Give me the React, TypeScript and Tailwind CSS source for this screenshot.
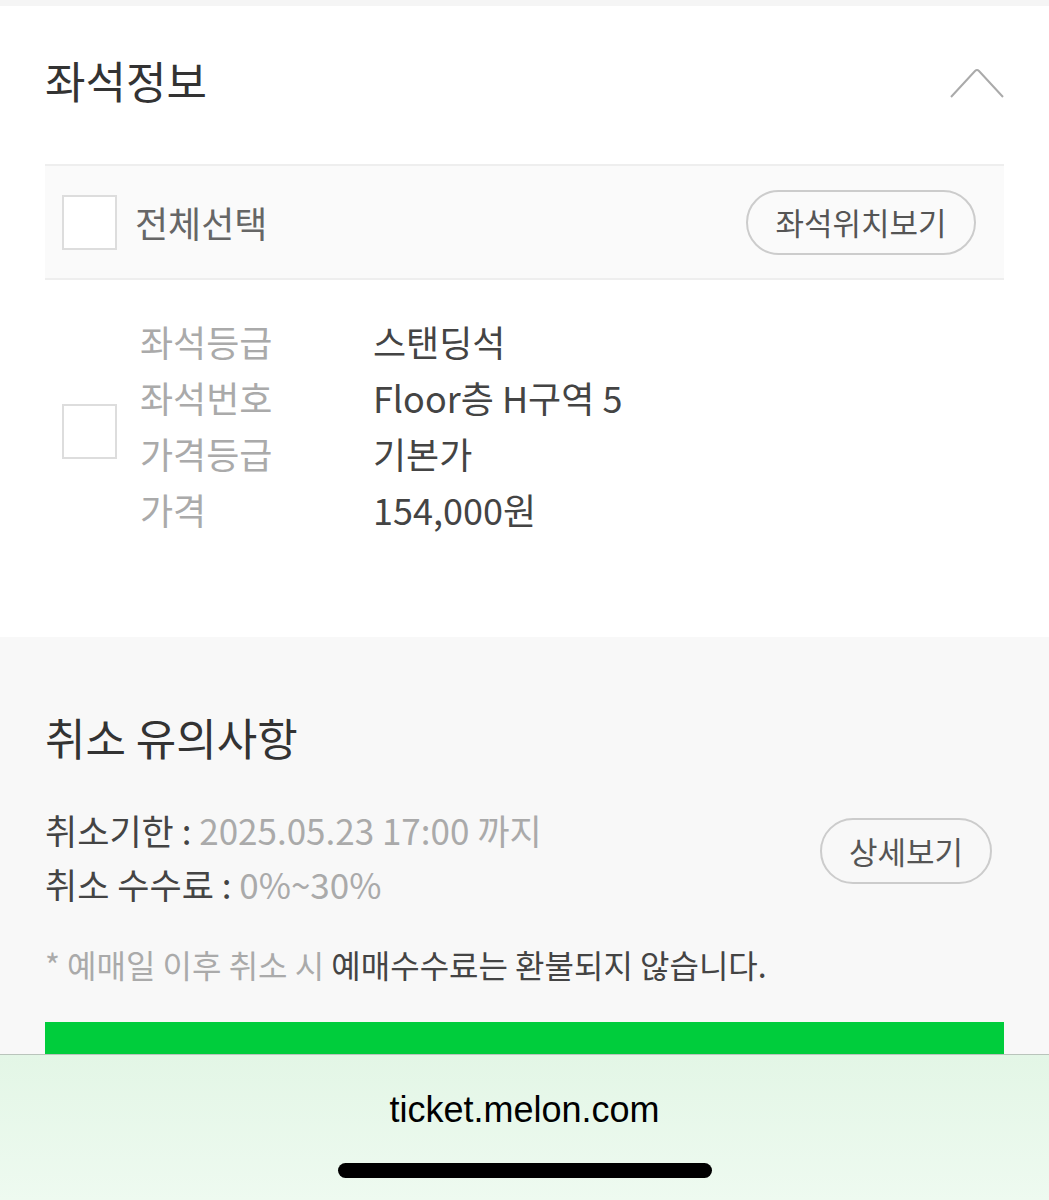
import React from 'react'

const rows = [
  { label: '좌석등급', value: '스탠딩석' },
  { label: '좌석번호', value: 'Floor층 H구역 5' },
  { label: '가격등급', value: '기본가' },
  { label: '가격', value: '154,000원' },
]

const Box: React.FC = () => (
  <div className="h-[55px] w-[55px] shrink-0 border-2 border-[#dddddd] bg-white"></div>
)

export default function App() {
  return (
    <div
      className="flex h-[1200px] w-[1049px] flex-col overflow-hidden bg-white"
      style={{ fontFamily: '"Noto Sans CJK KR", "Noto Sans", sans-serif' }}
    >
      {/* 상단 여백 */}
      <div className="h-[6px] bg-[#f5f5f5]"></div>

      {/* 좌석정보 */}
      <section className="px-[45px]">
        <div className="flex items-center justify-between pt-[52px] pb-[62px]">
          <h2 className="text-[44px] leading-[44px] text-[#333333]">좌석정보</h2>
          <svg width="54" height="30" viewBox="0 0 54 30" fill="none" className="mt-[6px]">
            <path d="M1 29 L25 3 Q27 1 29 3 L53 29" stroke="#aaaaaa" strokeWidth="2" />
          </svg>
        </div>

        <div className="flex h-[116px] items-center justify-between border-y-2 border-[#eeeeee] bg-[#fafafa] pl-[17px] pr-[28px]">
          <div className="flex items-center gap-[18px]">
            <Box />
            <span className="text-[36px] leading-none text-[#666666]">전체선택</span>
          </div>
          <button
            type="button"
            className="flex h-[65px] w-[230px] items-center justify-center rounded-full border-2 border-[#cccccc] text-[31px] text-[#555555]"
          >
            좌석위치보기
          </button>
        </div>

        <div className="flex items-center pt-[33px] pb-[100px] pl-[17px]">
          <div className="mt-[12px]">
            <Box />
          </div>
          <div className="ml-[23px] flex flex-col">
            {rows.map(r => (
              <div key={r.label} className="flex h-[56px] items-center text-[36px]">
                <span className="w-[233px] text-[#aaaaaa]">{r.label}</span>
                <span className="text-[#444444]">{r.value}</span>
              </div>
            ))}
          </div>
        </div>
      </section>

      {/* 취소 유의사항 */}
      <section className="flex-1 bg-[#f8f8f8] px-[45px] pt-[76px]">
        <h2 className="text-[44px] leading-[48px] text-[#333333]">취소 유의사항</h2>

        <div className="mt-[42px] flex items-center justify-between pr-[12px]">
          <div className="flex flex-col text-[35px]">
            <div className="flex h-[54px] items-center">
              <span className="text-[#444444]">취소기한 :&nbsp;</span>
              <span className="text-[#aaaaaa]">2025.05.23 17:00 까지</span>
            </div>
            <div className="flex h-[54px] items-center">
              <span className="text-[#444444]">취소 수수료 :&nbsp;</span>
              <span className="text-[#aaaaaa]">0%~30%</span>
            </div>
          </div>
          <button
            type="button"
            className="-mt-[12px] flex h-[66px] w-[172px] items-center justify-center rounded-full border-2 border-[#cccccc] text-[31px] text-[#555555]"
          >
            상세보기
          </button>
        </div>

        <p className="mt-[31px] flex h-[44px] items-center text-[32px]">
          <span className="text-[#aaaaaa]">* 예매일 이후 취소 시&nbsp;</span>
          <span className="text-[#444444]">예매수수료는 환불되지 않습니다.</span>
        </p>

        <div className="mt-[36px] h-[32px] bg-[#00cd3c]"></div>
      </section>

      {/* 브라우저 주소창 */}
      <div className="flex h-[146px] flex-col items-center border-t border-[#b9c4bb] bg-gradient-to-b from-[#e3f6e6] to-[#eefaf0]">
        <span
          className="mt-[34px] text-[36px] leading-[42px] text-black"
          style={{ fontFamily: '"Liberation Sans", Arial, sans-serif' }}
        >
          ticket.melon.com
        </span>
        <div className="mt-[32px] h-[15px] w-[374px] rounded-full bg-black"></div>
      </div>
    </div>
  )
}
